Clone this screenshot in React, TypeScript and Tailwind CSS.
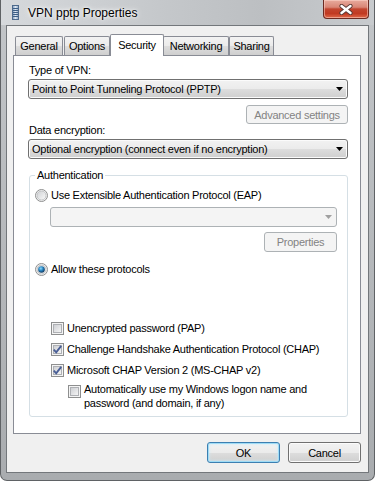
import React from 'react';

const btnFace =
  'bg-[linear-gradient(180deg,#f2f2f2_0%,#ebebeb_50%,#dddddd_51%,#cfcfcf_100%)] border border-[#707070] rounded-[3px] shadow-[inset_0_0_0_1px_#fbfbfb]';
const disabledFace = 'bg-[#f4f4f4] border border-[#adb2b5] rounded-[3px] text-[#838383]';

const Arrow = ({ color = '#000' }: { color?: string }) => (
  <svg width="7" height="4" viewBox="0 0 7 4" className="shrink-0">
    <path d="M0 0h7L3.5 4z" fill={color} />
  </svg>
);

const Radio = ({ checked }: { checked?: boolean }) => (
  <svg width="13" height="13" viewBox="0 0 13 13" className="shrink-0">
    <defs>
      <linearGradient id="rbFill" x1="0" y1="0" x2="1" y2="1">
        <stop offset="0" stopColor="#cfd1d4" />
        <stop offset="1" stopColor="#fafafa" />
      </linearGradient>
      <radialGradient id="rbDot" cx="0.4" cy="0.35" r="0.7">
        <stop offset="0" stopColor="#8fdcfb" />
        <stop offset="0.45" stopColor="#2a86c4" />
        <stop offset="1" stopColor="#0c2f52" />
      </radialGradient>
    </defs>
    <circle cx="6.5" cy="6.5" r="6" fill="#f4f4f4" stroke="#8e8f8f" />
    <circle cx="6.5" cy="6.5" r="4.5" fill="url(#rbFill)" stroke="#b9bbbe" strokeWidth="0.8" />
    {checked && <circle cx="6.5" cy="6.5" r="3.3" fill="url(#rbDot)" />}
  </svg>
);

const Check = ({ checked }: { checked?: boolean }) => (
  <svg width="13" height="13" viewBox="0 0 13 13" className="shrink-0">
    <defs>
      <linearGradient id="cbFill" x1="0" y1="0" x2="1" y2="1">
        <stop offset="0" stopColor="#cbcdd1" />
        <stop offset="1" stopColor="#f7f7f7" />
      </linearGradient>
    </defs>
    <rect x="0.5" y="0.5" width="12" height="12" fill="#f4f4f4" stroke="#8e8f8f" />
    <rect x="2.5" y="2.5" width="8" height="8" fill="url(#cbFill)" stroke="#aeb0b4" />
    {checked && (
      <path d="M2.8 6.6 L5.2 9.3 L10.2 2.8" fill="none" stroke="#4a5f97" strokeWidth="1.9" />
    )}
  </svg>
);

const tabs = [
  { label: 'General', cls: 'w-[48px]' },
  { label: 'Options', cls: 'w-[46px] ml-[1px]' },
  { label: 'Security', cls: 'w-[54px]', active: true },
  { label: 'Networking', cls: 'w-[66px] -ml-[1px]' },
  { label: 'Sharing', cls: 'w-[45px]' },
];

export default function App() {
  return (
    <div className="w-[375px] h-[481px] overflow-hidden flex flex-col border-x border-b border-[#5f6265] rounded-b-[7px] bg-[linear-gradient(180deg,#c3c6c9_0%,#a9acaf_100%)] font-['Liberation_Sans',Arial,sans-serif] text-[11px] tracking-[-0.25px] text-black">
      {/* Title bar */}
      <div className="h-[25px] flex items-center pl-[11px] pr-[5px] bg-[linear-gradient(90deg,#d6d9dc_0%,#c4c7ca_45%,#bcbfc2_70%,#c8cbce_100%)]">
        <svg width="7" height="15" viewBox="0 0 7 15" className="shrink-0">
          <defs>
            <linearGradient id="vpnIc" x1="0" y1="0" x2="1" y2="0">
              <stop offset="0" stopColor="#7f9bbd" />
              <stop offset="0.5" stopColor="#dfe8f2" />
              <stop offset="1" stopColor="#8aa4c2" />
            </linearGradient>
          </defs>
          <rect x="0.5" y="0.5" width="6" height="14" fill="url(#vpnIc)" stroke="#4d6a8c" />
          <path d="M1 3.5h5M1 5.5h5M1 7.5h5M1 9.5h5M1 11.5h5" stroke="#3d5f86" strokeWidth="1" />
        </svg>
        <span className="ml-[9px] text-[12px] tracking-normal [text-shadow:0_0_6px_#fff,0_0_3px_#fff]">
          VPN pptp Properties
        </span>
        <div className="ml-auto self-start w-[46px] h-[19px] flex items-center justify-center rounded-b-[4px] border border-t-0 border-[#6c2b22] bg-[linear-gradient(180deg,#e8ab9d_0%,#d98676_40%,#c2452f_50%,#c13a22_75%,#e0694a_100%)] shadow-[inset_0_0_0_1px_rgba(255,220,210,0.5)]">
          <svg width="14" height="11" viewBox="0 0 14 11">
            <path d="M2.5 2 L11.5 9 M11.5 2 L2.5 9" stroke="#5a3a35" strokeWidth="4.2" strokeLinecap="round" />
            <path d="M2.5 2 L11.5 9 M11.5 2 L2.5 9" stroke="#fff" strokeWidth="2.4" strokeLinecap="round" />
          </svg>
        </div>
      </div>

      {/* Client area */}
      <div className="mx-[5px] mb-[7px] flex-1 border border-[#73777b] bg-[#f0f0f0] flex flex-col pt-[8px] pl-[6px] pr-[7px]">
        {/* Tabs */}
        <div className="h-[21px] flex items-end pl-[2px]">
          {tabs.map((t) =>
            t.active ? (
              <div
                key={t.label}
                className={`${t.cls} relative z-10 h-[22px] -mb-[1px] bg-white border-x border-t border-[#898c95] rounded-t-[2px] flex items-start justify-center pt-[3px] leading-[14px]`}
              >
                {t.label}
              </div>
            ) : (
              <div
                key={t.label}
                className={`${t.cls} h-[19px] bg-[linear-gradient(180deg,#f3f3f3_0%,#ebebeb_50%,#dddddd_51%,#cfcfcf_100%)] border-x border-t border-[#898c95] rounded-t-[2px] flex items-center justify-center leading-[14px]`}
              >
                {t.label}
              </div>
            )
          )}
        </div>

        {/* Tab panel */}
        <div className="h-[379px] bg-white border border-[#898c95] flex flex-col pt-[7px] pl-[14px] pr-[12px]">
          <div className="h-[14px] leading-[14px] pl-[1px]">Type of VPN:</div>
          <div className={`mt-[2px] h-[20px] flex items-center pl-[3px] pr-[4px] ${btnFace}`}>
            <span className="flex-1 leading-[14px]">Point to Point Tunneling Protocol (PPTP)</span>
            <Arrow />
          </div>
          <div className={`mt-[6px] self-end w-[102px] h-[19px] flex items-center justify-center leading-[14px] ${disabledFace}`}>
            Advanced settings
          </div>
          <div className="h-[13px] leading-[13px] pl-[1px]">Data encryption:</div>
          <div className={`mt-[2px] h-[20px] flex items-center pl-[3px] pr-[4px] ${btnFace}`}>
            <span className="flex-1 leading-[14px]">Optional encryption (connect even if no encryption)</span>
            <Arrow />
          </div>

          {/* Authentication group */}
          <div className="mt-[16px] ml-[1px] h-[242px] border border-[#d5dfe5] rounded-[3px] flex flex-col">
            <div className="-mt-[8px] ml-[5px] w-fit px-[2px] bg-white h-[14px] leading-[14px]">Authentication</div>
            <div className="mt-[6px] pl-[5px] h-[14px] flex items-center gap-[3px] leading-[14px]">
              <Radio />
              <span>Use Extensible Authentication Protocol (EAP)</span>
            </div>
            <div className="mt-[5px] ml-[20px] w-[287px] h-[20px] flex items-center justify-end pr-[4px] bg-[#f4f4f4] border border-[#adb2b5] rounded-[3px]">
              <Arrow color="#a0a0a0" />
            </div>
            <div className={`mt-[5px] self-end mr-[10px] w-[73px] h-[20px] flex items-center justify-center leading-[14px] ${disabledFace}`}>
              Properties
            </div>
            <div className="mt-[10px] pl-[5px] h-[14px] flex items-center gap-[3px] leading-[14px]">
              <Radio checked />
              <span>Allow these protocols</span>
            </div>

            <div className="mt-[45px] pl-[21px] h-[14px] flex items-center gap-[3px] leading-[14px]">
              <Check />
              <span>Unencrypted password (PAP)</span>
            </div>
            <div className="mt-[7px] pl-[21px] h-[14px] flex items-center gap-[3px] leading-[14px]">
              <Check checked />
              <span>Challenge Handshake Authentication Protocol (CHAP)</span>
            </div>
            <div className="mt-[7px] pl-[21px] h-[14px] flex items-center gap-[3px] leading-[14px]">
              <Check checked />
              <span>Microsoft CHAP Version 2 (MS-CHAP v2)</span>
            </div>
            <div className="mt-[5px] pl-[38px] flex items-start gap-[3px] leading-[14px]">
              <div className="mt-[3px]">
                <Check />
              </div>
              <span>
                Automatically use my Windows logon name and
                <br />
                password (and domain, if any)
              </span>
            </div>
          </div>
        </div>

        {/* Buttons */}
        <div className="mt-[8px] flex justify-end gap-[8px]">
          <div className="w-[73px] h-[21px] flex items-center justify-center leading-[14px] rounded-[3px] border border-[#3c7fb1] bg-[linear-gradient(180deg,#f2f2f2_0%,#ebebeb_50%,#dddddd_51%,#cfcfcf_100%)] shadow-[inset_0_0_0_1px_#9fdcf6,inset_0_0_3px_1px_#c8ecfb]">
            OK
          </div>
          <div className={`w-[73px] h-[21px] flex items-center justify-center leading-[14px] ${btnFace}`}>Cancel</div>
        </div>
      </div>
    </div>
  );
}
